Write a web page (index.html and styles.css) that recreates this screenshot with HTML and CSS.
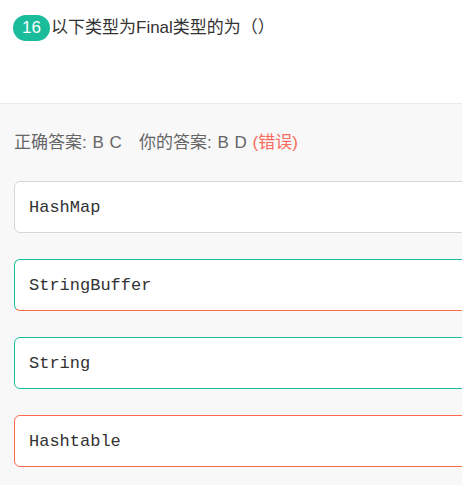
FILE: index.html
```html
<!DOCTYPE html>
<html lang="zh">
<head>
<meta charset="utf-8">
<link rel="stylesheet" href="styles.css">
</head>
<body>
<div class="page">
  <div class="question">
    <span class="badge">16</span>
    <span class="title">以下类型为Final类型的为（）</span>
  </div>
  <div class="answer-area">
    <div class="result">正确答案: B C&nbsp;&nbsp; 你的答案: B D <span class="wrong">(错误)</span></div>
    <div class="options">
      <div class="option">HashMap</div>
      <div class="option missed">StringBuffer</div>
      <div class="option correct">String</div>
      <div class="option chosen-wrong">Hashtable</div>
    </div>
  </div>
</div>
</body>
</html>
```
FILE: styles.css
```css
html, body {
  margin: 0;
  padding: 0;
  overflow: hidden;
  background: #f8f8f8;
}
body {
  font-family: "Liberation Sans", "Noto Sans CJK SC", sans-serif;
}
.page {
  width: 462px;
  height: 485px;
  overflow: hidden;
}
.question {
  height: 104px;
  box-sizing: border-box;
  padding: 15px 13px 0;
  background: #ffffff;
  border-bottom: 1px solid #ebebeb;
  display: flex;
  align-items: flex-start;
  gap: 1px;
}
.badge {
  height: 26px;
  line-height: 26px;
  padding: 0 8px;
  border-radius: 13px;
  background: #1bbc9b;
  color: #ffffff;
  font-size: 17px;
  min-width: 21px;
  text-align: center;
}
.title {
  font-size: 17px;
  line-height: 26px;
  color: #333333;
}
.answer-area {
  padding: 27px 0 0 14px;
  display: flex;
  flex-direction: column;
}
.result {
  font-size: 17px;
  line-height: 24px;
  color: #666666;
  word-spacing: 1px;
}
.wrong {
  color: #f96b5c;
}
.options {
  margin-top: 26px;
  display: flex;
  flex-direction: column;
  gap: 26px;
}
.option {
  width: 480px;
  box-sizing: border-box;
  height: 52px;
  padding: 0 14px;
  display: flex;
  align-items: center;
  background: #ffffff;
  border: 1px solid #d6d6d6;
  border-radius: 6px;
  font-family: "Liberation Mono", "Courier New", monospace;
  font-size: 17px;
  color: #333333;
}
.option.missed {
  border-color: #1bbc9b #1bbc9b #fc6a4b #1bbc9b;
}
.option.correct {
  border-color: #1bbc9b;
}
.option.chosen-wrong {
  border-color: #fc6a4b;
}
```
